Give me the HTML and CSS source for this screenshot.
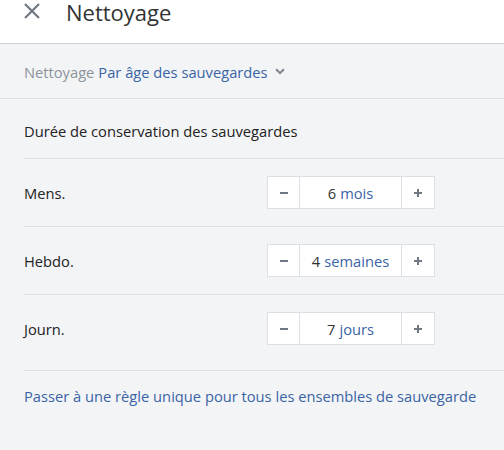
FILE: index.html
```html
<!DOCTYPE html>
<html lang="fr">
<head>
<meta charset="utf-8">
<link rel="stylesheet" href="styles.css">
</head>
<body>
<div class="page">
  <header class="header">
    <button class="close" aria-label="Fermer">
      <svg width="18" height="18" viewBox="0 0 18 18"><path d="M2 2 L16 16 M16 2 L2 16" stroke="#6f7883" stroke-width="2.2" fill="none"/></svg>
    </button>
    <h1 class="title">Nettoyage</h1>
  </header>
  <div class="subheader">
    <span class="muted">Nettoyage</span>
    <span class="link">Par âge des sauvegardes</span>
    <svg class="chev" width="10" height="7" viewBox="0 0 10 7"><path d="M1 1.2 L5 5 L9 1.2" stroke="#7d8690" stroke-width="2" fill="none"/></svg>
  </div>
  <div class="content">
    <div class="section-title">Durée de conservation des sauvegardes</div>
    <div class="rows">
      <div class="row">
        <span class="label">Mens.</span>
        <div class="stepper">
          <span class="btn"><svg width="10" height="10" viewBox="0 0 10 10"><rect x="1" y="4" width="8" height="2" fill="#6f7883"/></svg></span>
          <span class="value"><span class="num">6</span> <span class="unit">mois</span></span>
          <span class="btn"><svg width="10" height="10" viewBox="0 0 10 10"><rect x="1" y="4" width="8" height="2" fill="#6f7883"/><rect x="4" y="1" width="2" height="8" fill="#6f7883"/></svg></span>
        </div>
      </div>
      <div class="row">
        <span class="label">Hebdo.</span>
        <div class="stepper">
          <span class="btn"><svg width="10" height="10" viewBox="0 0 10 10"><rect x="1" y="4" width="8" height="2" fill="#6f7883"/></svg></span>
          <span class="value"><span class="num">4</span> <span class="unit">semaines</span></span>
          <span class="btn"><svg width="10" height="10" viewBox="0 0 10 10"><rect x="1" y="4" width="8" height="2" fill="#6f7883"/><rect x="4" y="1" width="2" height="8" fill="#6f7883"/></svg></span>
        </div>
      </div>
      <div class="row last">
        <span class="label">Journ.</span>
        <div class="stepper">
          <span class="btn"><svg width="10" height="10" viewBox="0 0 10 10"><rect x="1" y="4" width="8" height="2" fill="#6f7883"/></svg></span>
          <span class="value"><span class="num">7</span> <span class="unit">jours</span></span>
          <span class="btn"><svg width="10" height="10" viewBox="0 0 10 10"><rect x="1" y="4" width="8" height="2" fill="#6f7883"/><rect x="4" y="1" width="2" height="8" fill="#6f7883"/></svg></span>
        </div>
      </div>
    </div>
    <div class="footer-link">Passer à une règle unique pour tous les ensembles de sauvegarde</div>
  </div>
</div>
</body>
</html>
```

FILE: styles.css
```css
* { box-sizing: border-box; }
html, body {
  margin: 0;
  padding: 0;
  background: #f3f4f6;
  font-family: "Open Sans", "Noto Sans", sans-serif;
  color: #222;
}
.page {
  width: 504px;
  height: 450px;
  background: #f3f4f6;
}
.header {
  height: 44px;
  background: #fff;
  border-bottom: 1px solid #cfd3d8;
  display: flex;
  align-items: flex-start;
}
.close {
  border: 0;
  background: transparent;
  padding: 0;
  margin: 2px 0 0 23px;
  width: 18px;
  height: 18px;
  display: block;
}
.close svg { display: block; }
.title {
  margin: -2px 0 0 25px;
  font-size: 22px;
  line-height: 28px;
  font-weight: 400;
  font-stretch: 96%;
  color: #333;
}
.subheader {
  height: 55px;
  border-bottom: 1px solid #dcdfe3;
  padding: 1px 24px 0;
  display: flex;
  align-items: center;
  font-size: 14.7px;
}
.muted { color: #8c939b; margin-right: 4px; }
.link { color: #3a64a5; }
.chev { margin-left: 7px; margin-top: -1px; }
.content {
  padding: 0 0 0 24px;
}
.section-title {
  font-size: 14.7px;
  line-height: 20px;
  padding: 22px 0 17px;
  border-bottom: 1px solid #dcdfe3;
}
.row {
  display: grid;
  grid-template-columns: 243px 168px;
  align-items: center;
  padding: 17px 0 17px;
  border-bottom: 1px solid #dcdfe3;
  font-size: 14.7px;
}
.row.last { padding-bottom: 25px; }
.stepper {
  display: flex;
  height: 33px;
  border: 1px solid #dcdfe3;
  background: #fff;
}
.btn {
  width: 32px;
  display: flex;
  align-items: center;
  justify-content: center;
}
.btn svg { display: block; }
.btn:first-child { border-right: 1px solid #dcdfe3; }
.btn:last-child { border-left: 1px solid #dcdfe3; width: 33px; }
.value {
  flex: 1;
  display: flex;
  align-items: center;
  justify-content: center;
  gap: 4px;
  font-size: 14.7px;
}
.num { color: #333; }
.unit { color: #3a64a5; }
.footer-link {
  color: #3a64a5;
  font-size: 14.7px;
  line-height: 20px;
  padding-top: 15px;
}
```
